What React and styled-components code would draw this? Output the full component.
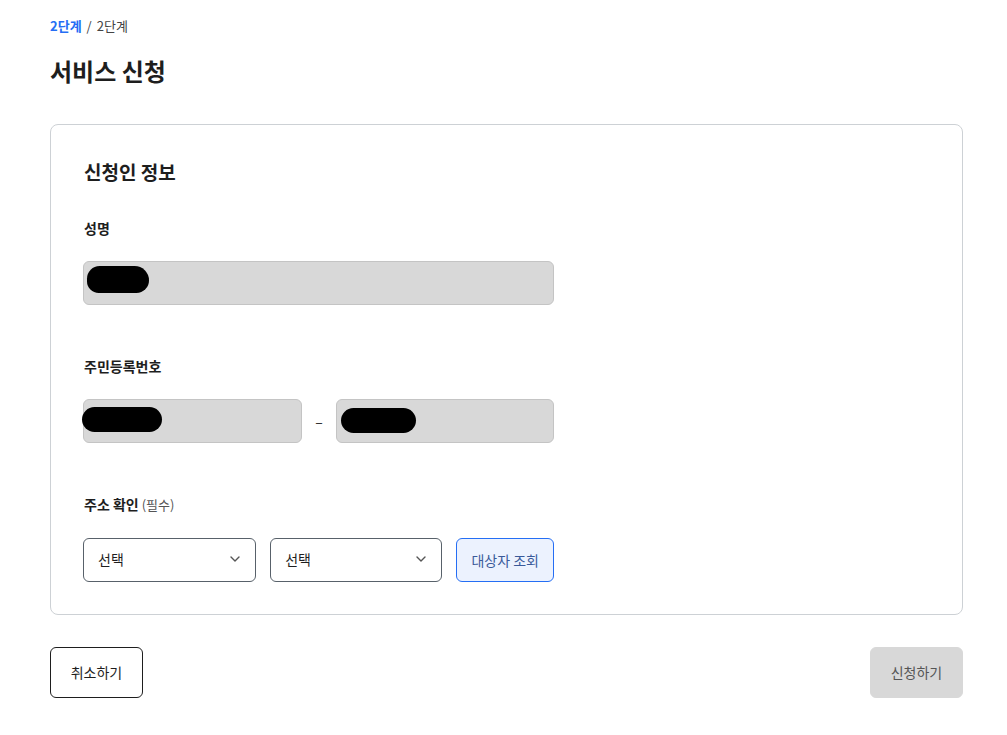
import React from "react";
import styled, { createGlobalStyle } from "styled-components";

const GlobalStyle = createGlobalStyle`
  body {
    margin: 0;
    background: #fff;
    font-family: "Noto Sans CJK KR", "Noto Sans", sans-serif;
    color: #1e1e1e;
  }
`;

const Page = styled.main`
  padding: 16px 44px 40px 50px;
  width: 913px;
`;

const Breadcrumb = styled.nav`
  display: flex;
  gap: 5px;
  font-size: 13px;
  line-height: 20px;
  color: #444;
`;

const Crumb = styled.span`
  color: ${({ $active }) => ($active ? "#256ef4" : "#444")};
  font-weight: ${({ $active }) => ($active ? 700 : 400)};
`;

const Title = styled.h1`
  margin: 18px 0 0;
  font-size: 24px;
  line-height: 34px;
  font-weight: 700;
  color: #1e1e1e;
`;

const Card = styled.section`
  margin-top: 36px;
  border: 1px solid #cdd1d5;
  border-radius: 8px;
  padding: 33px 32px 32px;
`;

const CardTitle = styled.h2`
  margin: 0 0 0 1px;
  font-size: 19px;
  line-height: 28px;
  font-weight: 700;
`;

const Field = styled.div`
  margin-top: ${({ $first }) => ($first ? "32px" : "51px")};
`;

const Label = styled.div`
  font-size: 14px;
  line-height: 20px;
  font-weight: 700;
  color: #1e1e1e;
  margin-left: 1px;
`;

const Hint = styled.span`
  font-size: 13px;
  font-weight: 400;
  color: #555;
  margin-left: 3px;
`;

const Row = styled.div`
  margin-top: 23px;
  display: flex;
  align-items: center;
  gap: ${({ $gap }) => $gap || "14px"};
  width: 471px;
`;

const Input = styled.div`
  position: relative;
  width: ${({ $w }) => $w};
  height: 44px;
  box-sizing: border-box;
  background: #d8d8d8;
  border: 1px solid #c4c4c4;
  border-radius: 6px;
  overflow: visible;
`;

const Blot = styled.span`
  position: absolute;
  background: #000;
  border-radius: 14px;
`;

const Dash = styled.span`
  width: 34px;
  text-align: center;
  font-size: 14px;
  color: #1e1e1e;
`;

const Select = styled.div`
  width: ${({ $w }) => $w};
  height: 44px;
  box-sizing: border-box;
  border: 1px solid #58616a;
  border-radius: 6px;
  padding: 0 14px 2px;
  display: flex;
  align-items: center;
  justify-content: space-between;
  font-size: 14px;
  color: #1e1e1e;
`;

const SearchButton = styled.button`
  width: 98px;
  height: 44px;
  box-sizing: border-box;
  border: 1px solid #256ef4;
  border-radius: 6px;
  background: #ecf2fe;
  color: #3a5a9a;
  font-family: inherit;
  font-size: 14px;
  padding-bottom: 2px;
`;

const Actions = styled.div`
  margin-top: 32px;
  display: flex;
  justify-content: space-between;
`;

const ActionButton = styled.button`
  width: 93px;
  height: 51px;
  box-sizing: border-box;
  border-radius: 6px;
  font-family: inherit;
  font-size: 14px;
  padding-bottom: 2px;
  border: 1px solid ${({ $disabled }) => ($disabled ? "#d8d8d8" : "#1e1e1e")};
  background: ${({ $disabled }) => ($disabled ? "#d8d8d8" : "#fff")};
  color: ${({ $disabled }) => ($disabled ? "#555" : "#1e1e1e")};
`;

const Chevron = () => (
  <svg width="12" height="12" viewBox="0 0 12 12" fill="none">
    <path d="M2 4l4 4 4-4" stroke="#555" strokeWidth="1.4" strokeLinecap="round" strokeLinejoin="round" />
  </svg>
);

export default function App() {
  return (
    <Page>
      <GlobalStyle />
      <Breadcrumb>
        <Crumb $active>2단계</Crumb>
        <span>/</span>
        <Crumb>2단계</Crumb>
      </Breadcrumb>
      <Title>서비스 신청</Title>
      <Card>
        <CardTitle>신청인 정보</CardTitle>
        <Field $first>
          <Label>성명</Label>
          <Row>
            <Input $w="471px">
              <Blot style={{ left: 3, top: 4, width: 62, height: 27, borderRadius: "14px 16px 14px 13px" }} />
            </Input>
          </Row>
        </Field>
        <Field>
          <Label>주민등록번호</Label>
          <Row $gap="0">
            <Input $w="219px">
              <Blot style={{ left: -2, top: 7, width: 80, height: 25 }} />
            </Input>
            <Dash>–</Dash>
            <Input $w="218px">
              <Blot style={{ left: 4, top: 8, width: 75, height: 25 }} />
            </Input>
          </Row>
        </Field>
        <Field>
          <Label>
            주소 확인<Hint>(필수)</Hint>
          </Label>
          <Row>
            <Select $w="174px">
              선택
              <Chevron />
            </Select>
            <Select $w="173px">
              선택
              <Chevron />
            </Select>
            <SearchButton>대상자 조회</SearchButton>
          </Row>
        </Field>
      </Card>
      <Actions>
        <ActionButton>취소하기</ActionButton>
        <ActionButton $disabled>신청하기</ActionButton>
      </Actions>
    </Page>
  );
}
